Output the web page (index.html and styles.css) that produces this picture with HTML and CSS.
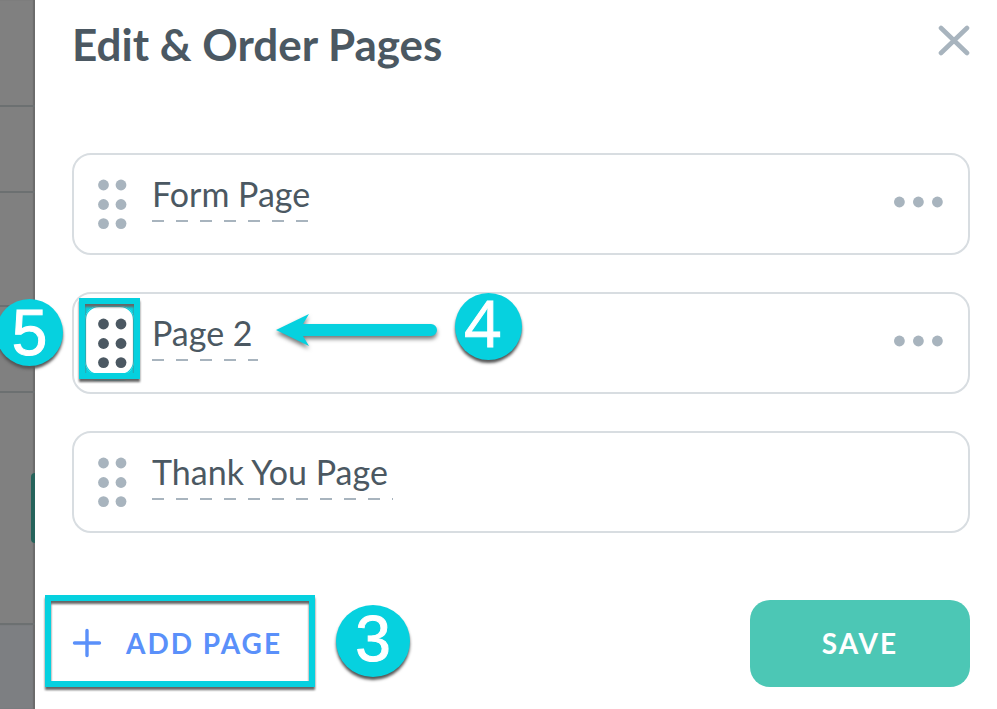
FILE: index.html
```html
<!DOCTYPE html>
<html lang="en">
<head>
  <meta charset="UTF-8">
  <meta name="viewport" content="width=device-width, initial-scale=1.0">
  <title>Edit &amp; Order Pages</title>
  <link rel="stylesheet" href="styles.css">
</head>
<body>
  <!-- dimmed editor behind the drawer -->
  <div class="backdrop">
    <div class="row row-first"></div>
    <div class="row row-short"></div>
    <div class="row row-tall"></div>
    <div class="row row-short"></div>
    <div class="row row-last"><span class="behind-button"></span></div>
    <div class="behind-footer"></div>
  </div>

  <main class="drawer">
    <header class="drawer-header">
      <h1>Edit &amp; Order Pages</h1>
      <button type="button" class="close" aria-label="Close">
        <svg width="32" height="32" viewBox="0 0 32 32"><path d="M3 3L29 28M29 3L3 28" stroke="currentColor" stroke-width="4.6" stroke-linecap="round"/></svg>
      </button>
    </header>

    <ul class="pages">
      <li class="page">
        <button type="button" class="handle" aria-label="Move Form Page">
          <svg width="30" height="50" viewBox="0 0 30 50" fill="currentColor"><circle cx="5.500" cy="6" r="5.4"/><circle cx="23" cy="6" r="5.4"/><circle cx="5.500" cy="25.500" r="5.4"/><circle cx="23" cy="25.500" r="5.4"/><circle cx="5.500" cy="44.600" r="5.4"/><circle cx="23" cy="44.600" r="5.4"/></svg>
        </button>
        <input class="page-name" type="text" value="Form Page" aria-label="Page name">
        <button type="button" class="more" aria-label="More options">
          <svg width="50" height="12" viewBox="0 0 50 12" fill="currentColor"><circle cx="5.400" cy="6" r="5.4"/><circle cx="24.400" cy="6" r="5.4"/><circle cx="43.400" cy="6" r="5.4"/></svg>
        </button>
      </li>
      <li class="page">
        <button type="button" class="handle handle-active" aria-label="Move Page 2">
          <svg width="30" height="50" viewBox="0 0 30 50" fill="currentColor"><circle cx="5.500" cy="6" r="5.4"/><circle cx="23" cy="6" r="5.4"/><circle cx="5.500" cy="25.500" r="5.4"/><circle cx="23" cy="25.500" r="5.4"/><circle cx="5.500" cy="44.600" r="5.4"/><circle cx="23" cy="44.600" r="5.4"/></svg>
        </button>
        <input class="page-name" type="text" value="Page 2" aria-label="Page name">
        <button type="button" class="more" aria-label="More options">
          <svg width="50" height="12" viewBox="0 0 50 12" fill="currentColor"><circle cx="5.400" cy="6" r="5.4"/><circle cx="24.400" cy="6" r="5.4"/><circle cx="43.400" cy="6" r="5.4"/></svg>
        </button>
        <span class="handle-ring"></span>
        <span class="outline outline-handle"></span>
        <span class="step step-five">5</span>
        <svg class="arrow" width="164" height="36" viewBox="0 0 164 36"><path d="M0 18L33 2L27 12H155A6 6 0 0 1 155 24H27L33 34Z" fill="#06d1df"/></svg>
        <span class="step step-four">4</span>
      </li>
      <li class="page">
        <button type="button" class="handle" aria-label="Move Thank You Page">
          <svg width="30" height="50" viewBox="0 0 30 50" fill="currentColor"><circle cx="5.500" cy="6" r="5.4"/><circle cx="23" cy="6" r="5.4"/><circle cx="5.500" cy="25.500" r="5.4"/><circle cx="23" cy="25.500" r="5.4"/><circle cx="5.500" cy="44.600" r="5.4"/><circle cx="23" cy="44.600" r="5.4"/></svg>
        </button>
        <input class="page-name" type="text" value="Thank You Page" aria-label="Page name">
      </li>
    </ul>

    <footer class="drawer-footer">
      <button type="button" class="add">
        <svg width="30" height="30" viewBox="0 0 30 30"><path d="M15 2.500V27.500M2.500 15H27.500" stroke="currentColor" stroke-width="3.400" stroke-linecap="round"/></svg>
        Add Page
      </button>
      <button type="button" class="save">Save</button>
      <span class="outline outline-add"></span>
      <span class="step step-three">3</span>
    </footer>
  </main>
</body>
</html>
```

FILE: styles.css
```css
* {
  box-sizing: border-box;
}
body {
  display: flex;
  min-height: 100vh;
  margin: 0;
  overflow: hidden;
  background: #fff;
  color: #4b5862;
  font-family: Lato, "Liberation Sans", sans-serif;
}
button,
input {
  padding: 0;
  border: 0;
  background: none;
  color: inherit;
  font-family: inherit;
}
button {
  cursor: pointer;
}
svg {
  display: block;
  fill: none;
}
svg[fill="currentColor"] {
  fill: currentColor;
}

/* dimmed page */
.backdrop {
  display: flex;
  flex-direction: column;
  flex: none;
  width: 35px;
  background: #808080;
  box-shadow: inset -2px 0 1px #6b6b6b;
}
.row {
  border-bottom: 2px solid #6c7071;
}
.row-first {
  height: 107px;
}
.row-short {
  height: 86px;
}
.row-tall {
  height: 114px;
}
.row-last {
  height: 232px;
  padding-top: 80px;
}
.behind-button {
  display: block;
  height: 70px;
  margin-left: 31px;
  border-radius: 12px 0 0 12px;
  background: #26635b;
}
.behind-footer {
  flex: 1;
  background: #7d7f82;
  box-shadow: inset -2px 0 1px #6b6b6b;
}

/* drawer */
.drawer {
  flex: 1;
  padding: 16px 27px 20px 37px;
}
.drawer-header {
  display: flex;
  justify-content: space-between;
  align-items: flex-start;
  height: 137px;
}
h1 {
  margin: 0;
  font-size: 44px;
  line-height: 56px;
  font-weight: 700;
}
.close {
  margin-top: 9px;
  color: #a8b4be;
}
.pages {
  display: flex;
  flex-direction: column;
  gap: 37px;
  margin: 0;
  padding: 0;
  list-style: none;
}
.page {
  position: relative;
  display: flex;
  align-items: center;
  height: 102px;
  padding: 0 24px;
  border: 2px solid #d8dde1;
  border-radius: 19px;
}
.handle {
  width: 30px;
  margin-right: 24px;
  color: #a8b4be;
}
.handle-active {
  color: #4b5862;
}
.page-name {
  field-sizing: content;
  height: 52px;
  margin-bottom: 16px;
  padding: 0 5px 6px 0;
  outline: 0;
  background: repeating-linear-gradient(90deg, #a8b4be 0 12px, transparent 12px 24px) left bottom / 100% 2px no-repeat;
  font-size: 34px;
}
.more {
  margin: 0 0 4px auto;
  color: #a8b4be;
}
.drawer-footer {
  position: relative;
  display: flex;
  justify-content: space-between;
  margin-top: 67px;
}
.add,
.save {
  height: 87px;
  padding-bottom: 2px;
  font-size: 28px;
  font-weight: 700;
  letter-spacing: 2px;
  text-transform: uppercase;
}
.add {
  display: flex;
  align-items: center;
  gap: 24px;
  color: #5a90fa;
}
.save {
  width: 220px;
  border-radius: 20px;
  background: #4cc7b5;
  color: #fff;
}

/* step markers */
.step {
  position: absolute;
  width: 67px;
  height: 67px;
  border-radius: 50%;
  background: #06d1df;
  box-shadow: 0 3px 3px #555;
  color: #fff;
  font-family: "Liberation Sans", sans-serif;
  font-size: 64px;
  line-height: 68px;
  text-align: center;
  -webkit-text-stroke: 1px #fff;
}
.step-five {
  top: 5px;
  left: -78px;
}
.step-four {
  top: -1px;
  left: 381px;
  padding-right: 12px;
  font-family: "Open Sans", sans-serif;
  line-height: 60px;
}
.step-three {
  top: 5px;
  left: 264px;
  width: 74px;
  height: 72px;
}
.outline {
  position: absolute;
  border: 6px solid #06d1df;
  filter: drop-shadow(0 3px 1px #666);
  pointer-events: none;
}
.outline-handle {
  top: 4px;
  left: 5px;
  width: 61px;
  height: 81px;
}
.outline-add {
  top: -5px;
  left: -27px;
  width: 270px;
  height: 92px;
}
.handle-ring {
  position: absolute;
  top: 6px;
  left: 5px;
  width: 61px;
  height: 81px;
  border: 6px solid #06d1df;
  border-radius: 20px;
  box-shadow: inset 0 0 0 1px #06d1df;
  pointer-events: none;
}
.arrow {
  position: absolute;
  top: 18px;
  left: 202px;
  overflow: visible;
  filter: drop-shadow(0 3px 2px #777);
}
```
